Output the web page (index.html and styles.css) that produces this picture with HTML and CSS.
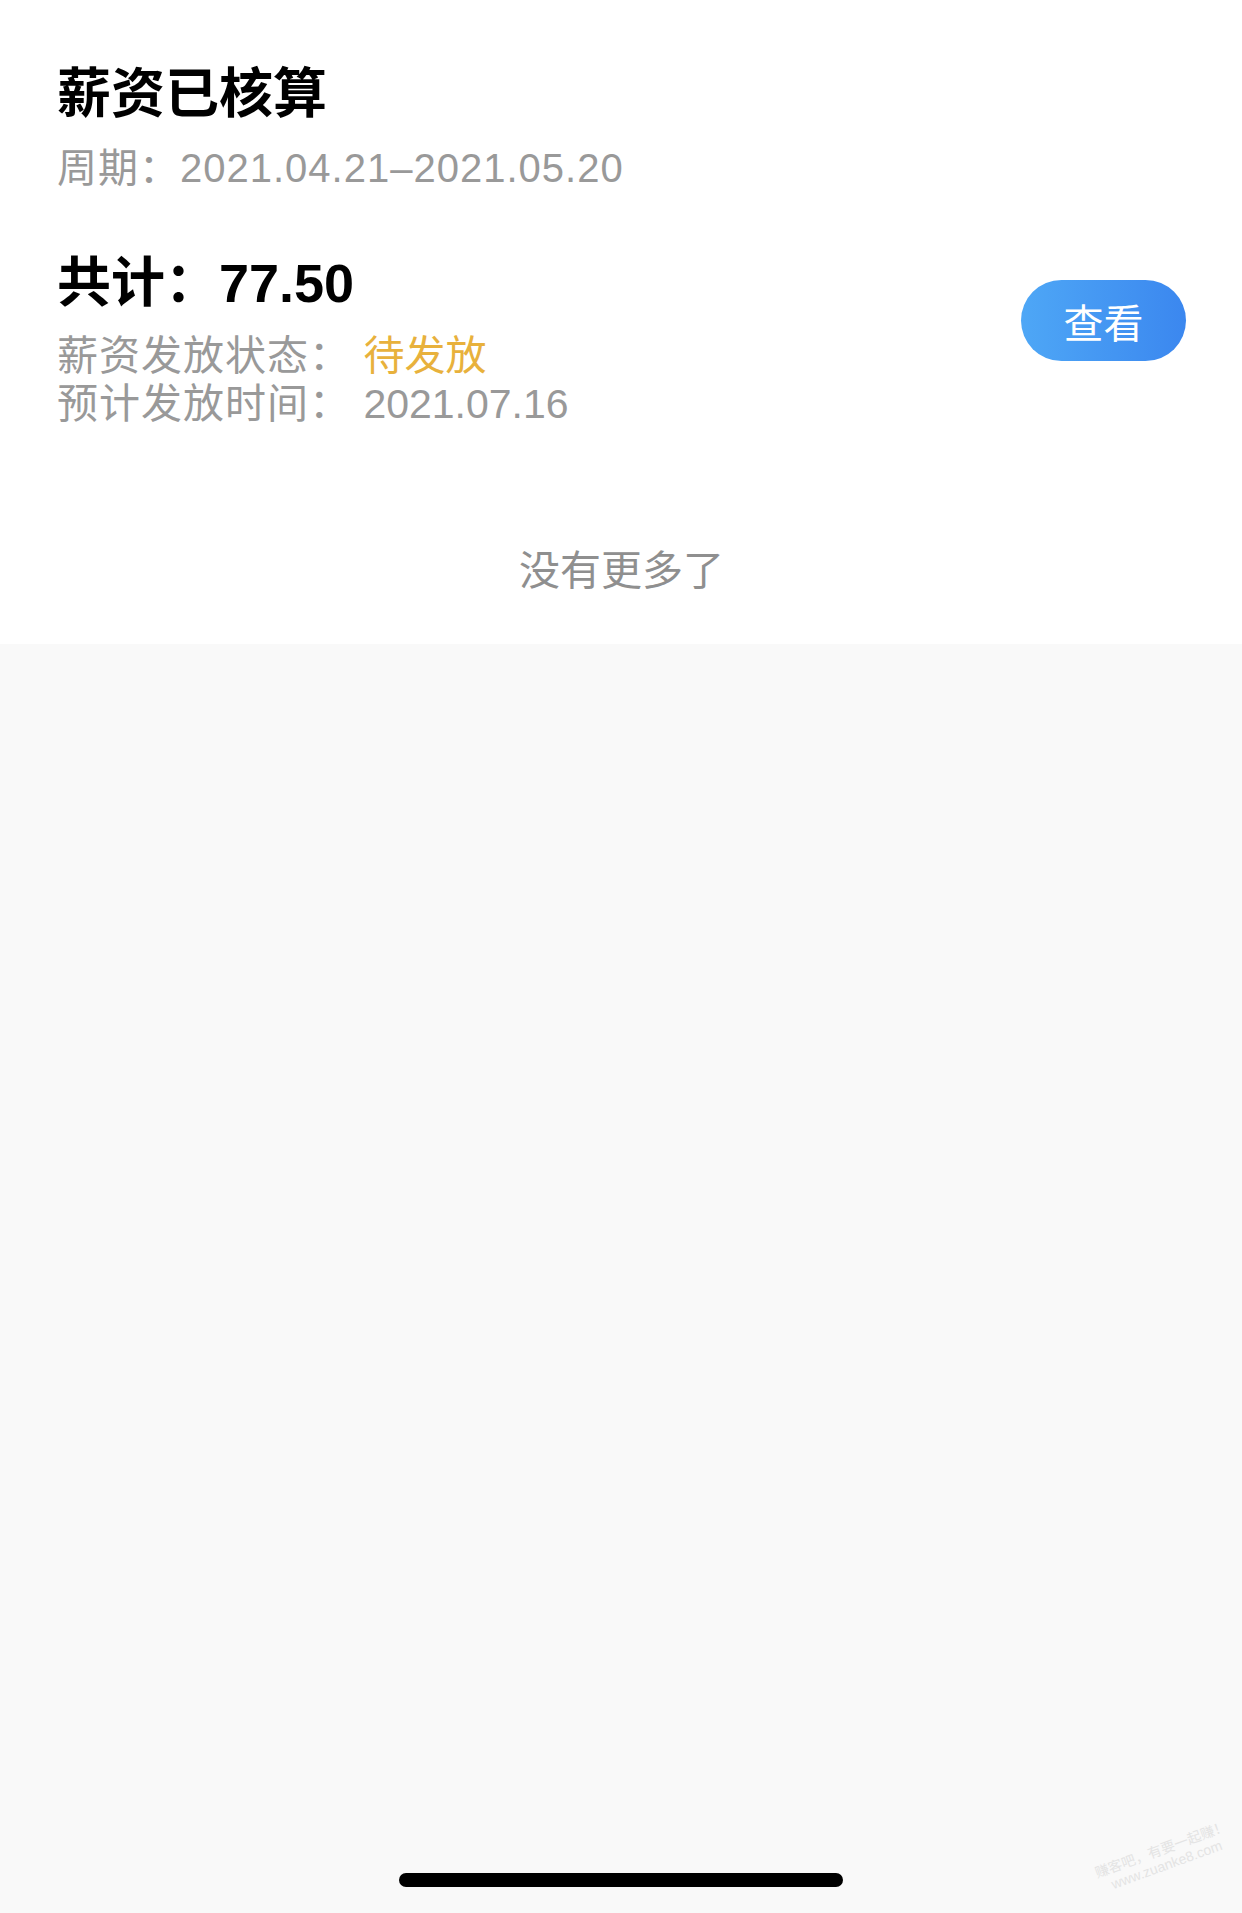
FILE: index.html
```html
<!DOCTYPE html>
<html lang="zh-CN">
<head>
    <meta charset="UTF-8">
    <meta name="viewport" content="width=device-width, initial-scale=1.0">
    <title>薪资记录</title>
    <link rel="stylesheet" href="styles.css">
</head>
<body>
    <div class="salary-list">
        <!-- 薪资记录 -->
        <div class="salary-item">
            <h2 class="item-title">薪资已核算</h2>
            <p class="item-period">周期：2021.04.21–2021.05.20</p>

            <div class="item-body">
                <div class="item-info">
                    <p class="item-total">共计：77.50</p>
                    <div class="info-row">
                        <span class="info-label">薪资发放状态：</span>
                        <span class="info-value status-pending">待发放</span>
                    </div>
                    <div class="info-row">
                        <span class="info-label">预计发放时间：</span>
                        <span class="info-value">2021.07.16</span>
                    </div>
                </div>
                <button class="view-button">查看</button>
            </div>
        </div>

        <p class="no-more">没有更多了</p>
    </div>

    <div class="home-bar">
        <div class="home-indicator"></div>
    </div>

    <div class="watermark">赚客吧，有要一起赚！<br>www.zuanke8.com</div>
</body>
</html>
```

FILE: styles.css
```css
html, body {
    margin: 0;
    padding: 0;
}

body {
    min-height: 100vh;
    display: flex;
    flex-direction: column;
    background-color: #f9f9f9;
    font-family: "Liberation Sans", "Noto Sans CJK SC", sans-serif;
    color: #000;
    position: relative;
}

p, h2 {
    margin: 0;
}

.salary-list {
    background-color: #fff;
    padding: 62px 56px 0 57px;
    height: 582px;
}

.item-title {
    font-size: 54px;
    font-weight: bold;
    line-height: 64px;
}

.item-period {
    margin-top: 18px;
    font-size: 40px;
    line-height: 48px;
    letter-spacing: 1px;
    color: #999;
}

.item-body {
    display: flex;
    justify-content: space-between;
    align-items: flex-start;
    margin-top: 59px;
}

.item-total {
    font-size: 54px;
    font-weight: bold;
    line-height: 64px;
}

.info-row {
    font-size: 41px;
    line-height: 48px;
    color: #999;
}

.info-row:first-of-type {
    margin-top: 17px;
}

.info-label {
    display: inline-block;
    width: 295px;
    letter-spacing: 1px;
}

.status-pending {
    color: #e8b13c;
}

.view-button {
    width: 165px;
    height: 81px;
    margin-top: 29px;
    border: none;
    border-radius: 41px;
    background: linear-gradient(90deg, #4ea7f6, #3b87ef);
    color: #fff;
    font-family: "Noto Sans CJK SC", sans-serif;
    font-size: 40px;
    cursor: pointer;
}

.no-more {
    margin-top: 119px;
    text-align: center;
    font-size: 41px;
    line-height: 48px;
    color: #8f8f8f;
}

.home-bar {
    flex: 1;
    display: flex;
    align-items: flex-end;
    justify-content: center;
    padding-bottom: 26px;
}

.home-indicator {
    width: 444px;
    height: 14px;
    border-radius: 7px;
    background-color: #000;
}

/* 截图水印 */
.watermark {
    position: absolute;
    right: 8px;
    bottom: 40px;
    transform: rotate(-20deg);
    font-size: 14px;
    line-height: 16px;
    color: #e4e4e4;
    text-align: center;
}
```
